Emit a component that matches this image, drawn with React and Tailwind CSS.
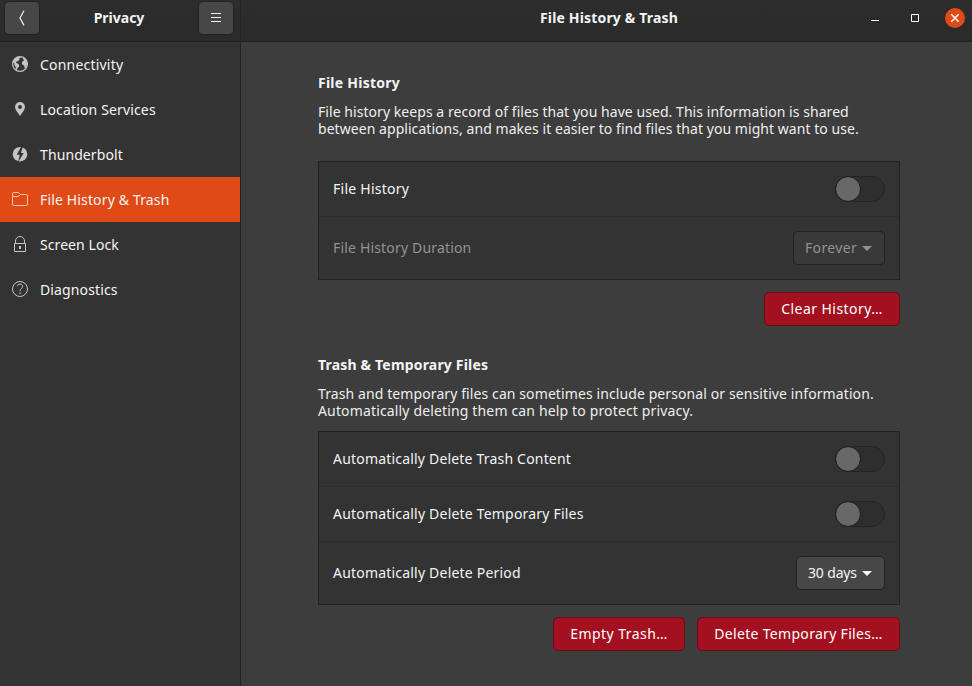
const headerButton =
  "flex h-[34px] w-9 items-center justify-center rounded-[5px] border border-[#222] bg-[#474747] text-[#f0f0f0]";

function GlobeIcon() {
  return (
    <svg width="16" height="16" viewBox="0 0 16 16" fill="currentColor">
      <circle cx="8" cy="8" r="7.400" fill="none" stroke="currentColor" strokeWidth="1.200" />
      <path d="M2 4.200 4.500 1.500 8 .8l.6 1.200-1.600.8.4 1L5.800 5.200l-1.400.2-.4 1.400 1.700.8 1.500 1.400-.3 1.700-1.500 1.600-.6 2-1-.6-.2-3-1.300-1.600.1-1.700L1.600 6.600Z" />
      <path d="m10.600 2.600 1.100-1.200 2.400 2 1.200 3.600-.2 2.600-1.200 2.200-1.300.2-.4-2.600-1.800-.6-.6-2 1-1.700 1.200-.4-.3-1.100Z" />
    </svg>
  );
}

function BoltIcon() {
  return (
    <svg width="16" height="16" viewBox="0 0 16 16" fill="currentColor">
      <circle cx="8" cy="8.200" r="7.300" />
      <path
        d="M9.600 0 4.700 8.700h3.100L6 16.500 11.700 7H8.900L11.200 0Z"
        className="fill-[#333]"
      />
    </svg>
  );
}

function PinIcon() {
  return (
    <svg width="16" height="16" viewBox="0 0 16 16" fill="currentColor" fillRule="evenodd">
      <path d="M8 1a5 5 0 0 0-5 5c0 2.800 2.700 5.500 5 9 2.300-3.500 5-6.200 5-9a5 5 0 0 0-5-5Zm0 3a2 2 0 1 1 0 4 2 2 0 0 1 0-4Z" />
    </svg>
  );
}

function FolderIcon() {
  return (
    <svg width="16" height="16" viewBox="0 0 16 16" fill="none" stroke="currentColor">
      <path d="M.5 5V3A1.500 1.500 0 0 1 2 1.500h4.500L8.500 3.500H14A1.500 1.500 0 0 1 15.500 5v8a1.500 1.500 0 0 1-1.500 1.500H2A1.500 1.500 0 0 1 .5 13V5.500h5.500l2.500-2" />
    </svg>
  );
}

function LockIcon() {
  return (
    <svg width="16" height="16" viewBox="0 0 16 16" fill="none" stroke="currentColor">
      <path d="M2.500 7.500h11v8h-11zM3.500 7.500V5a4.500 4.500 0 0 1 9 0v2.500" />
      <path d="M7 10h2v3H7z" fill="currentColor" stroke="none" />
    </svg>
  );
}

function HelpIcon() {
  return (
    <svg width="16" height="16" viewBox="0 0 16 16" fill="none" stroke="currentColor">
      <circle cx="8" cy="8" r="7.500" />
      <path d="M5.400 5C5.500 3.800 6.600 3.100 8 3.100c1.600 0 2.700.9 2.700 2.300 0 2-2.700 2.100-2.700 4.700" />
      <path d="M7.400 11.500h1.200v1.400H7.400z" fill="currentColor" stroke="none" />
    </svg>
  );
}

const items = [
  { label: "Connectivity", icon: <GlobeIcon />, tracking: "tracking-[0.2px]" },
  { label: "Location Services", icon: <PinIcon />, tracking: "tracking-[0.150px]" },
  { label: "Thunderbolt", icon: <BoltIcon />, tracking: "tracking-[0.1px]" },
  { label: "File History & Trash", icon: <FolderIcon />, tracking: "tracking-[0.150px]", active: true },
  { label: "Screen Lock", icon: <LockIcon />, tracking: "tracking-[0.080px]" },
  { label: "Diagnostics", icon: <HelpIcon />, tracking: "tracking-[0.130px]" },
];

function Switch() {
  return (
    <div className="flex h-[26px] w-[50px] rounded-full border border-[#232323] bg-[#2e2e2e]">
      <div className="h-6 w-6 rounded-full bg-[#686868] outline outline-[#232323]" />
    </div>
  );
}

function Row({ label, tracking, tall, dim, children }) {
  return (
    <div
      className={`flex items-center justify-between border-[#2d2d2d] px-[14px] not-last:border-b ${tall ? "h-[62px]" : "h-[55px]"} ${dim ? "text-[#929292]" : ""}`}
    >
      <span className={`pb-0.5 ${tracking}`}>{label}</span>
      {children}
    </div>
  );
}

function Dropdown({ label, className }) {
  return (
    <div className={`flex h-[34px] items-center justify-between rounded-[5px] border border-[#222] pr-3 pl-[11px] ${className}`}>
      <span className="pb-0.5">{label}</span>
      <svg width="10" height="5" viewBox="0 0 10 5" fill="currentColor">
        <path d="M0 0h10L5 5Z" />
      </svg>
    </div>
  );
}

function DangerButton({ label, className }) {
  return (
    <button
      className={`flex h-[34px] items-center justify-center rounded-[5px] border border-[#6c0b17] bg-[#a31120] pb-0.5 text-white ${className}`}
    >
      {label}
    </button>
  );
}

export default function App() {
  return (
    <div className="flex h-[686px] w-[972px] overflow-hidden bg-[#3d3d3d] font-['Noto_Sans','Open_Sans',sans-serif] text-[14px] leading-[17px] whitespace-nowrap text-[#f4f4f4]">
      <aside className="flex w-[241px] shrink-0 flex-col border-r border-[#222] bg-[#333]">
        <header className="flex h-[42px] items-start justify-between border-b border-[#202020] bg-linear-to-b from-[#2d2d2d] to-[#2a2a2a] px-1 pt-px pr-[6px]">
          <button className={headerButton}>
            <svg width="8" height="16" viewBox="0 0 8 16" fill="none" stroke="currentColor" strokeWidth="1.200">
              <path d="M6 .8 2 8l4 7.400" />
            </svg>
          </button>
          <h1 className="pt-2 font-bold">Privacy</h1>
          <button className={headerButton}>
            <svg width="10" height="10" viewBox="0 0 10 10" stroke="currentColor">
              <path d="M0 .5h10M0 4.500h10M0 8.500h10" />
            </svg>
          </button>
        </header>
        <nav>
          {items.map((item) => (
            <div
              key={item.label}
              className={`flex h-[45px] items-center gap-3 px-3 ${item.active ? "bg-[#e04a17]" : ""}`}
            >
              <span className={`pb-px ${item.active ? "text-[#f7c4b0]" : "text-[#c4c4c4]"}`}>{item.icon}</span>
              <span className={item.tracking}>{item.label}</span>
            </div>
          ))}
        </nav>
      </aside>

      <main className="flex min-w-0 flex-1 flex-col">
        <header className="flex h-[42px] items-start border-b border-[#202020] bg-linear-to-b from-[#2d2d2d] to-[#2a2a2a] pt-[8px] pr-[7px] pl-[299px]">
          <h2 className="flex-1 pt-px font-bold tracking-[0.160px]">File History &amp; Trash</h2>
          <div className="flex items-center">
            <svg width="8" height="8" viewBox="0 0 8 8" className="mr-8">
              <path d="M0 6h8v1H0z" fill="#fff" />
            </svg>
            <svg width="8" height="8" viewBox="0 0 8 8" className="mr-[26px]">
              <path d="M.5.5h7v7h-7z" fill="none" stroke="#fff" />
            </svg>
            <svg width="20" height="20" viewBox="0 0 20 20">
              <circle cx="10" cy="10" r="10" fill="#e04a17" />
              <path d="m6.300 6.300 7.400 7.400m0-7.400-7.400 7.400" stroke="#fff" strokeWidth="1.500" />
            </svg>
          </div>
        </header>

        <div className="ml-[77px] flex w-[582px] flex-col">
          <h3 className="mt-8 font-bold tracking-[0.250px]">File History</h3>
          <p className="mt-3 text-[#eee]">
            <span className="block tracking-[0.055px]">File history keeps a record of files that you have used. This information is shared</span>
            <span className="block tracking-[0.052px]">between applications, and makes it easier to find files that you might want to use.</span>
          </p>
          <section className="mt-[24px] border border-[#222] bg-[#333]">
            <Row label="File History" tracking="tracking-[0.250px]"><Switch /></Row>
            <Row label="File History Duration" tracking="tracking-[0.170px]" tall dim>
              <Dropdown label="Forever" className="w-[92px] bg-[#393939] tracking-[0.350px]" />
            </Row>
          </section>
          <div className="mt-3 flex justify-end">
            <DangerButton label="Clear History…" className="w-[136px] tracking-[0.450px]" />
          </div>

          <h3 className="mt-[30px] font-bold tracking-[0.180px]">Trash &amp; Temporary Files</h3>
          <p className="mt-3 text-[#eee]">
            <span className="block tracking-[0.098px]">Trash and temporary files can sometimes include personal or sensitive information.</span>
            <span className="block tracking-[0.150px]">Automatically deleting them can help to protect privacy.</span>
          </p>
          <section className="mt-3 border border-[#222] bg-[#333]">
            <Row label="Automatically Delete Trash Content" tracking="tracking-[0.190px]"><Switch /></Row>
            <Row label="Automatically Delete Temporary Files" tracking="tracking-[0.2px]"><Switch /></Row>
            <Row label="Automatically Delete Period" tracking="tracking-[0.2px]" tall>
              <Dropdown label="30 days" className="w-[89px] bg-[#474747] tracking-[-0.150px]" />
            </Row>
          </section>
          <div className="mt-3 flex justify-end gap-3">
            <DangerButton label="Empty Trash…" className="w-[132px] tracking-[0.450px]" />
            <DangerButton label="Delete Temporary Files…" className="w-[203px] tracking-[0.310px]" />
          </div>
        </div>
      </main>
    </div>
  );
}
